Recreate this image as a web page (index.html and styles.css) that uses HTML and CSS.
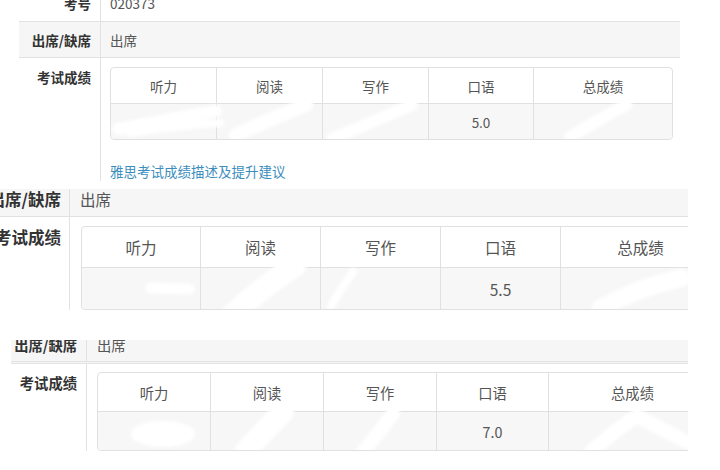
FILE: index.html
```html
<!DOCTYPE html>
<html lang="zh">
<head>
<meta charset="utf-8">
<link rel="stylesheet" href="styles.css">
</head>
<body>
<div class="stack">

  <section class="panel p1">
    <div class="row r-top">
      <div class="lbl">考号</div><div class="val">020373</div>
    </div>
    <div class="row r-att">
      <div class="lbl">出席/缺席</div><div class="val">出席</div>
    </div>
    <div class="row r-score">
      <div class="lbl">考试成绩</div>
      <div class="val">
        <div class="tblwrap">
          <table class="scores">
            <tr class="hd"><td class="c1">听力</td><td class="c2">阅读</td><td class="c3">写作</td><td class="c4">口语</td><td class="c5">总成绩</td></tr>
            <tr class="dt"><td></td><td></td><td></td><td>5.0</td><td></td></tr>
          </table>
          <svg class="smudge" viewBox="0 0 562 72" width="562" height="72">
            <defs><filter id="b1"><feGaussianBlur stdDeviation="1.6"/></filter></defs>
            <g fill="none" stroke="#fff" stroke-linecap="round" filter="url(#b1)">
              <path d="M8 62 Q60 52 106 44" stroke-width="12"/>
              <path d="M20 66 Q70 58 110 56" stroke-width="8"/>
              <path d="M126 68 Q160 52 196 38" stroke-width="14"/>
              <path d="M222 72 Q262 55 302 38" stroke-width="12"/>
              <path d="M460 70 Q490 52 516 38" stroke-width="12"/>
            </g>
          </svg>
        </div>
        <a class="link" href="#">雅思考试成绩描述及提升建议</a>
      </div>
    </div>
  </section>

  <section class="panel p2">
    <div class="row r-att">
      <div class="lbl">出席/缺席</div><div class="val">出席</div>
    </div>
    <div class="row r-score">
      <div class="lbl">考试成绩</div>
      <div class="val">
        <div class="tblwrap">
          <table class="scores">
            <tr class="hd"><td class="c1">听力</td><td class="c2">阅读</td><td class="c3">写作</td><td class="c4">口语</td><td class="c5">总成绩</td></tr>
            <tr class="dt"><td></td><td></td><td></td><td>5.5</td><td></td></tr>
          </table>
          <svg class="smudge" viewBox="0 0 640 83" width="640" height="83">
            <defs><filter id="b2"><feGaussianBlur stdDeviation="1.6"/></filter></defs>
            <g fill="none" stroke="#fff" stroke-linecap="round" filter="url(#b2)">
              <path d="M70 62 L108 63" stroke-width="11"/>
              <path d="M152 88 Q180 62 214 40" stroke-width="22"/>
              <path d="M250 80 Q262 60 272 46" stroke-width="8"/>
              <path d="M520 82 Q556 62 600 52" stroke-width="18"/>
            </g>
          </svg>
        </div>
      </div>
    </div>
  </section>

  <section class="panel p3">
    <div class="row r-att">
      <div class="lbl">出席/缺席</div><div class="val">出席</div>
    </div>
    <div class="row r-score">
      <div class="lbl">考试成绩</div>
      <div class="val">
        <div class="tblwrap">
          <table class="scores">
            <tr class="hd"><td class="c1">听力</td><td class="c2">阅读</td><td class="c3">写作</td><td class="c4">口语</td><td class="c5">总成绩</td></tr>
            <tr class="dt"><td></td><td></td><td></td><td>7.0</td><td></td></tr>
          </table>
          <svg class="smudge" viewBox="0 0 620 78" width="620" height="78">
            <defs><filter id="b3"><feGaussianBlur stdDeviation="1.6"/></filter></defs>
            <g fill="none" stroke="#fff" stroke-linecap="round" filter="url(#b3)">
              <ellipse cx="66" cy="62" rx="30" ry="11" fill="#fff" stroke-width="4"/>
              <path d="M148 80 Q166 60 186 40" stroke-width="22"/>
              <path d="M266 80 Q282 60 296 42" stroke-width="14"/>
              <path d="M494 80 Q518 58 540 44 Q566 58 590 70" stroke-width="14"/>
            </g>
          </svg>
        </div>
      </div>
    </div>
  </section>

</div>
</body>
</html>
```

FILE: styles.css
```css
html, body {
  margin: 0;
  padding: 0;
  background: #fff;
}
body {
  width: 720px;
  height: 470px;
  overflow: hidden;
  font-family: "Noto Sans CJK SC", "Liberation Sans", sans-serif;
  color: #555;
}
.stack {
  display: flex;
  flex-direction: column;
  gap: 7px;
}
.panel {
  overflow: hidden;
  background: #fff;
}
.row {
  display: grid;
  border-bottom: 1px solid #e2e2e2;
}
.lbl {
  display: flex;
  justify-content: flex-end;
  font-weight: bold;
  color: #333;
  border-right: 1px solid #e2e2e2;
  white-space: nowrap;
  min-width: 0;
}
.val {
  white-space: nowrap;
  min-width: 0;
}
.r-att {
  background: #f6f6f6;
}
.r-att .lbl, .r-att .val, .r-top .lbl, .r-top .val {
  display: flex;
  align-items: center;
}
.r-score {
  border-bottom: none;
}
.r-score .lbl {
  align-items: flex-start;
}
.tblwrap {
  position: relative;
  width: max-content;
}
.scores {
  border-collapse: separate;
  border-spacing: 0;
  border: 1px solid #e0e0e0;
  border-radius: 4px;
  text-align: center;
  color: #555;
}
.scores td {
  padding: 0;
  border-right: 1px solid #e0e0e0;
}
.scores td:last-child {
  border-right: none;
}
.scores .dt td {
  border-top: 1px solid #e0e0e0;
  background: #f7f7f7;
}
.scores .dt td:first-child { border-bottom-left-radius: 4px; }
.scores .dt td:last-child { border-bottom-right-radius: 4px; }
.smudge {
  position: absolute;
  left: 0;
  top: 0;
  pointer-events: none;
}

/* panel 1 */
.p1 {
  margin-left: 19px;
  width: 661px;
  height: 182px;
  font-size: 13.5px;
}
.p1 .row { grid-template-columns: 82px 1fr; }
.p1 .lbl { padding-right: 9px; }
.p1 .val { padding-left: 9px; }
.p1 .r-top { height: 37px; margin-top: -16px; }
.p1 .r-att { height: 35px; }
.p1 .r-score .lbl { padding-top: 9px; line-height: 20px; }
.p1 .r-score .val { padding: 9px 8px 0 9px; }
.p1 .scores { width: 563px; }
.p1 .scores .hd td { height: 35px; }
.p1 .scores .dt td { height: 35px; }
.p1 .c1, .p1 .c2, .p1 .c3 { width: 105px; }
.p1 .c4 { width: 104px; }
.link {
  display: block;
  margin-top: 21px;
  line-height: 20px;
  color: #3b8dbd;
  text-decoration: none;
}

/* panel 2 */
.p2 {
  width: 688px;
  height: 144px;
  font-size: 15.5px;
}
.p2 .lbl { font-size: 16.5px; }
.p2 .row { grid-template-columns: 70px 1fr; }
.p2 .lbl { padding-right: 8px; }
.p2 .val { padding-left: 10px; }
.p2 .r-att { height: 35px; margin-top: -8px; }
.p2 .r-score .lbl { padding-top: 9px; line-height: 22px; }
.p2 .r-score .val { padding: 9px 0 0 11px; }
.p2 .scores { width: 640px; }
.p2 .scores .hd td { height: 40px; }
.p2 .scores .dt td { height: 41px; }
.p2 .c1 { width: 118px; }
.p2 .c2, .p2 .c3, .p2 .c4 { width: 119px; }

/* panel 3 */
.p3 {
  margin-left: 11px;
  width: 677px;
  height: 130px;
  font-size: 14.3px;
}
.p3 .row { grid-template-columns: 76px 1fr; }
.p3 .lbl { padding-right: 9px; }
.p3 .val { padding-left: 10px; }
.p3 .r-att { height: 34px; margin-top: -13px; border-bottom: 3px double #e2e2e2; }
.p3 .r-score .lbl { padding-top: 8px; line-height: 22px; }
.p3 .r-score .val { padding: 8px 0 0 10px; }
.p3 .scores { width: 620px; }
.p3 .scores .hd td { height: 38px; }
.p3 .scores .dt td { height: 38px; }
.p3 .c1, .p3 .c2, .p3 .c3 { width: 112px; }
.p3 .c4 { width: 111px; }
```
